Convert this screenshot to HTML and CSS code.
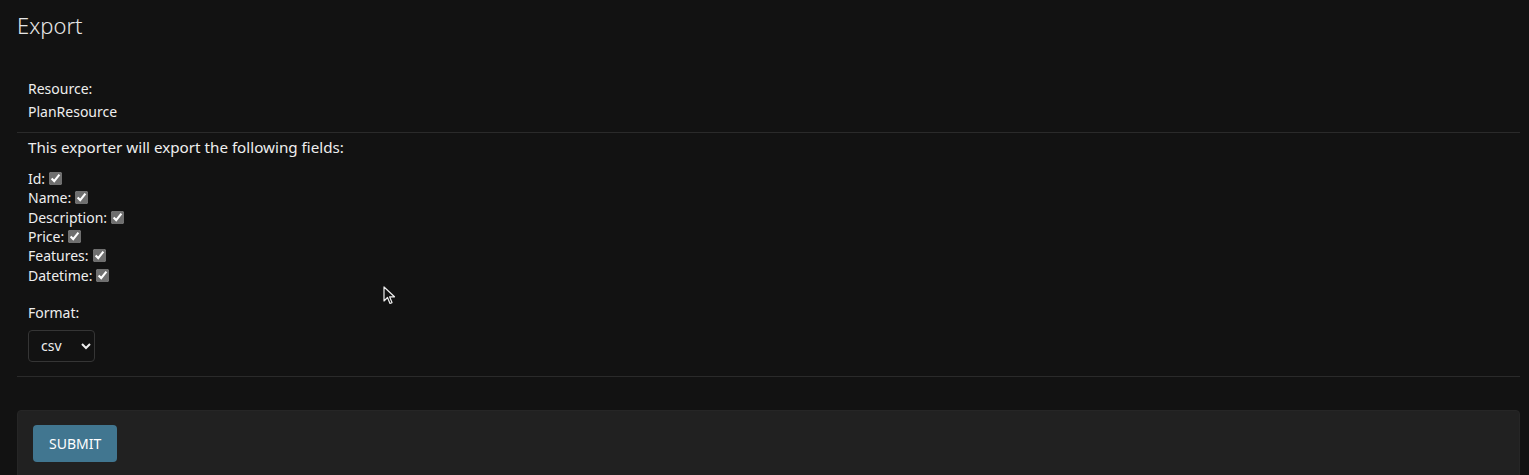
FILE: index.html
```html
<!DOCTYPE html>
<html lang="en">

<head>
    <meta charset="UTF-8">
    <meta name="viewport" content="width=device-width, initial-scale=1.0">
    <title>Export</title>
    <link rel="stylesheet" href="styles.css">
</head>

<body>
    <div class="content">
        <h1>Export</h1>

        <form class="export-form">
            <fieldset class="module">
                <div class="form-row">
                    <div class="row-label">Resource:</div>
                    <div class="row-value">PlanResource</div>
                </div>

                <div class="form-row fields-row">
                    <p class="help">This exporter will export the following fields:</p>
                    <div class="field-list">
                        <div class="field"><label>Id:</label> <input type="checkbox" checked></div>
                        <div class="field"><label>Name:</label> <input type="checkbox" checked></div>
                        <div class="field"><label>Description:</label> <input type="checkbox" checked></div>
                        <div class="field"><label>Price:</label> <input type="checkbox" checked></div>
                        <div class="field"><label>Features:</label> <input type="checkbox" checked></div>
                        <div class="field"><label>Datetime:</label> <input type="checkbox" checked></div>
                    </div>
                    <label class="format-label" for="format">Format:</label>
                    <select id="format" class="format-select">
                        <option>csv</option>
                        <option>xls</option>
                        <option>xlsx</option>
                        <option>json</option>
                    </select>
                </div>
            </fieldset>

            <div class="submit-row">
                <button type="submit" class="btn-submit">SUBMIT</button>
            </div>
        </form>
    </div>

    <!-- mouse pointer in the capture -->
    <svg class="pointer" width="14" height="20" viewBox="0 0 14 20">
        <path d="M1 1 L1 15 L4.5 11.5 L7 17.5 L9 16.6 L6.6 10.8 L11.5 10.8 Z" fill="#111" stroke="#eee" stroke-width="1.2" stroke-linejoin="round" />
    </svg>
</body>

</html>
```

FILE: styles.css
```css
* {
    box-sizing: border-box;
    margin: 0;
    padding: 0;
}

body {
    font-family: 'Noto Sans', 'Open Sans', sans-serif;
    font-size: 14px;
    background-color: #121212;
    color: #eeeeee;
    color-scheme: dark;
    overflow: hidden;
}

.content {
    padding: 12px 9px 0 17px;
}

h1 {
    font-size: 22px;
    font-weight: 300;
    line-height: 26px;
    color: #e6e6e6;
    margin-bottom: 31px;
}

fieldset.module {
    border: none;
}

.form-row {
    padding: 10px 11px 10px;
    border-bottom: 1px solid #2a2a2a;
}

.row-label,
.row-value {
    line-height: 20px;
}

.row-value {
    margin-top: 3px;
}

.fields-row {
    padding: 4px 11px 14px;
}

.help {
    font-size: 15.2px;
    line-height: 20px;
}

.field-list {
    margin-top: 12px;
}

.field {
    display: flex;
    align-items: center;
    gap: 4px;
    height: 19.3px;
}

.field input {
    width: 13px;
    height: 13px;
    margin: 0;
    accent-color: #6f6f6f;
    color-scheme: light;
}

.format-label {
    display: block;
    line-height: 20px;
    margin-top: 18px;
}

.format-select {
    display: block;
    margin-top: 7px;
    width: 67px;
    height: 32px;
    padding: 0 6px 0 8px;
    font-family: inherit;
    font-size: 14px;
    color: #eeeeee;
    background-color: #121212;
    border: 1px solid #353535;
    border-radius: 4px;
}

.submit-row {
    margin-top: 33px;
    padding: 14px 15px 20px;
    background-color: #212121;
    border: 1px solid #262626;
    border-radius: 4px;
}

.btn-submit {
    height: 37px;
    padding: 0 16px;
    font-family: inherit;
    font-size: 14px;
    color: #ffffff;
    background-color: #417690;
    border: none;
    border-radius: 4px;
    cursor: pointer;
}

.pointer {
    position: absolute;
    left: 383px;
    top: 286px;
}
```
